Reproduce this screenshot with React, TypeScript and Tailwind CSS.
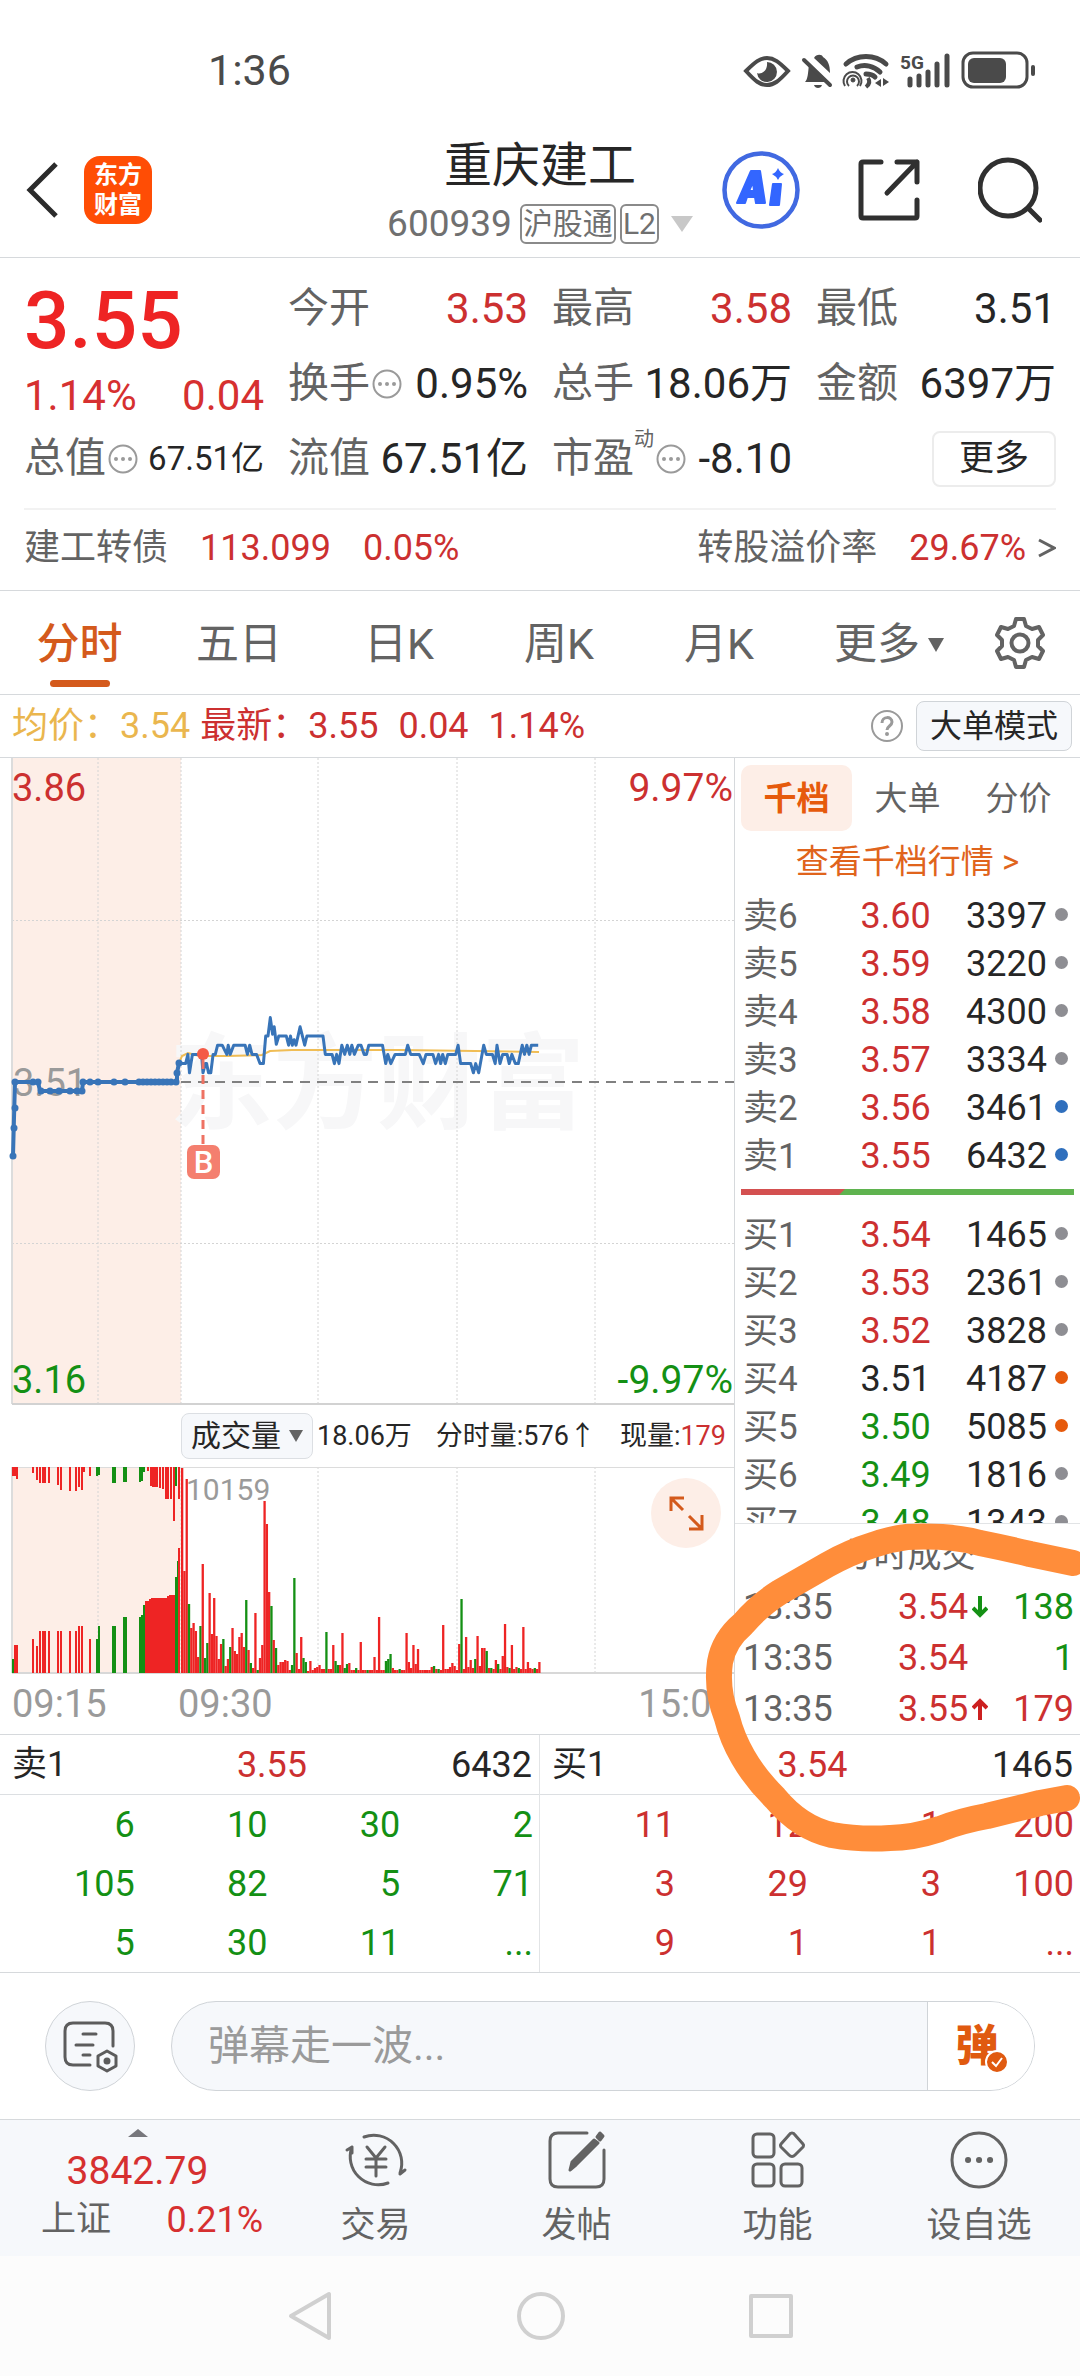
import { useState } from 'react';

type Tone = 'red' | 'green' | 'black';

type BookRow = {
  label: string;
  price: string;
  tone: Tone;
  qty: number;
  dot: string;
};

const TONE: Record<Tone, string> = {
  red: 'text-[#cc3030]',
  green: 'text-[#149014]',
  black: 'text-[#262626]',
};

const SELLS: BookRow[] = [
  { label: '卖6', price: '3.60', tone: 'red', qty: 3397, dot: 'bg-[#8e8e93]' },
  { label: '卖5', price: '3.59', tone: 'red', qty: 3220, dot: 'bg-[#8e8e93]' },
  { label: '卖4', price: '3.58', tone: 'red', qty: 4300, dot: 'bg-[#8e8e93]' },
  { label: '卖3', price: '3.57', tone: 'red', qty: 3334, dot: 'bg-[#8e8e93]' },
  { label: '卖2', price: '3.56', tone: 'red', qty: 3461, dot: 'bg-[#2f6fbd]' },
  { label: '卖1', price: '3.55', tone: 'red', qty: 6432, dot: 'bg-[#2f6fbd]' },
];

const BUYS: BookRow[] = [
  { label: '买1', price: '3.54', tone: 'red', qty: 1465, dot: 'bg-[#8e8e93]' },
  { label: '买2', price: '3.53', tone: 'red', qty: 2361, dot: 'bg-[#8e8e93]' },
  { label: '买3', price: '3.52', tone: 'red', qty: 3828, dot: 'bg-[#8e8e93]' },
  { label: '买4', price: '3.51', tone: 'black', qty: 4187, dot: 'bg-[#e65a0c]' },
  { label: '买5', price: '3.50', tone: 'green', qty: 5085, dot: 'bg-[#e65a0c]' },
  { label: '买6', price: '3.49', tone: 'green', qty: 1816, dot: 'bg-[#8e8e93]' },
  { label: '买7', price: '3.48', tone: 'green', qty: 1343, dot: 'bg-[#8e8e93]' },
];

const TRADES: { time: string; price: string; dir: 'up' | 'down' | ''; qty: number; tone: Tone }[] = [
  { time: '13:35', price: '3.54', dir: 'down', qty: 138, tone: 'green' },
  { time: '13:35', price: '3.54', dir: '', qty: 1, tone: 'green' },
  { time: '13:35', price: '3.55', dir: 'up', qty: 179, tone: 'red' },
];

const SELL_QUEUE = [
  ['6', '10', '30', '2'],
  ['105', '82', '5', '71'],
  ['5', '30', '11', '...'],
];

const BUY_QUEUE = [
  ['11', '12', '1', '200'],
  ['3', '29', '3', '100'],
  ['9', '1', '1', '...'],
];

// [minute since 09:30, ticks above previous close]
const PRICES: [number, number][] = [
  [0, 2], [2, 2], [3, 3], [3.7, 1], [5, 3], [9, 3], [9.6, 1], [10.6, 2], [11.2, 2], [12, 1], [13, 1], [14, 3],
  [15, 3], [16, 4], [18, 4], [20, 3], [20.6, 4], [21.5, 3], [23, 4], [28, 4], [29, 3], [30, 4], [31, 3],
  [33, 3], [34.5, 2], [36, 2], [37, 5], [38, 5], [39, 7], [40, 5.2], [40.7, 6], [41.6, 4.1], [42.7, 5],
  [46, 5], [47, 4], [47.8, 5], [48.6, 4], [49.4, 4.6], [50.2, 4], [52, 6], [54, 4], [55, 5], [62, 5],
  [63, 3], [66, 3], [67, 2], [68, 3], [69, 2], [70.2, 4], [71.5, 3], [72.6, 4], [73.7, 3], [74.6, 4],
  [75.7, 3], [77.4, 4], [78.6, 4], [80, 3], [81, 3], [82, 4], [88, 4], [89.4, 2], [90.3, 3], [91.6, 2],
  [93.5, 3], [98, 3], [99, 4], [100.3, 3], [104, 3], [105.8, 2], [107, 3], [110, 3], [111.2, 2],
  [112.5, 3], [113.4, 2], [114.3, 3], [115.4, 2], [116.5, 3], [120, 3], [121, 4], [122.1, 2], [126.5, 2],
  [127.7, 1], [128.7, 2], [130, 1], [132.2, 4], [133.3, 3], [136, 3], [137.2, 2], [138, 4], [139.3, 2],
  [140.5, 3], [142.4, 3], [143.3, 2], [144.5, 3], [146, 2], [147.3, 2], [149, 4], [150, 3], [151, 4],
  [152, 3], [153, 4], [156, 4],
];

const AUCTION_DOTS: [number, number][] = [
  [13, 1156], [14, 1128], [15, 1108], [15, 1082], [33, 1082], [38, 1082], [41, 1091], [50, 1091], [59, 1091],
  [70, 1091], [77, 1091], [82, 1091], [83, 1082], [90, 1082], [98, 1082], [114, 1082], [125, 1082],
  [139, 1082], [143, 1082], [147, 1082], [151, 1082], [155, 1082], [159, 1082], [163, 1082], [167, 1082],
  [171, 1082], [176, 1082], [177, 1073], [179, 1063],
];

// one value per minute, negative means a falling (green) bar
const VOLUMES = [
  205, 102, 194, -69, 45, 50, 42, 16, -47, 109, -15, -30, 80, 39, 75, 37, 14, 29, -34, 7, 14, -26, 45, 22, 19, 36,
  40, 26, -73, 23, -10, 5, 60, -3, 15, 28, 172, 149, 81, -67, 33, -25, 8, 11, 11, 13, 12, 3, -8, -95, 20, 4, 36,
  -15, -11, 2, 12, 3, 5, 6, 8, 4, 4, -41, 4, 4, 28, -12, -8, 8, 40, -5, -9, 10, 3, 3, -5, 3, 31, 3, 3, -3, 3, 3,
  16, 3, 56, 3, 3, -12, -14, -19, 5, 3, 3, -4, 3, 3, 40, 11, 5, 28, 9, 24, 3, 3, 3, 3, 3, 6, -7, 4, -4, 3, 48, 4,
  4, 6, 10, 7, 3, 29, -74, 4, 36, 6, 13, 5, -14, 37, 7, 25, 25, -22, 5, -5, 4, 13, -9, 4, 17, 49, 6, -5, 28, 4,
  6, -5, 4, 46, 4, 11, 5, 4, -5, 4, 11,
];

// [x, height], negative height is green
const AUCTION_BOTTOM: [number, number][] = [
  [13, -14], [15, 28], [17, 28], [33, 34], [37, 27], [40, 42], [43, 42], [45, 42], [49, 42], [58, 42], [61, 42],
  [70, 42], [76, 42], [79, 47], [82, 47], [90, 34], [97, -34], [99, -47], [113, -47], [115, -47], [124, -56],
  [126, -56], [140, -56], [142, -58], [144, -68], [146, 72], [148, 72], [150, 74], [152, 75], [154, 75],
  [156, 75], [158, 75], [160, 75], [162, 75], [164, 75], [166, 75], [168, 77], [170, 78], [172, 78], [174, 78],
  [176, -96], [178, -112], [179, 125],
];

const AUCTION_TOP: [number, number][] = [
  [13, 9], [15, 9], [17, 12], [33, 6], [37, 13], [40, 16], [43, 16], [45, 16], [49, 16], [58, 18], [61, 23],
  [70, 24], [76, 24], [79, 20], [82, 23], [84, 5], [90, 9], [97, -9], [99, -8], [113, -16], [115, -16],
  [124, -15], [126, -15], [140, -15], [142, -14], [144, -5], [148, 4], [151, 19], [153, 20], [155, 20],
  [157, 20], [160, 21], [163, 22], [166, 32], [168, 32], [171, 32], [174, 54], [176, -19], [179, 32],
];

const GRID_X = [98, 181, 318, 457, 595];
const MINUTE = 2.29;

function volumeColor(v: number) {
  return v < 0 ? '#149014' : '#ee2424';
}

export default function App() {
  return (
    <div className="w-full overflow-hidden bg-white font-[Roboto,'Noto_Sans_CJK_SC',sans-serif] leading-none text-[#262626]">
      <StatusBar />
      <Header />
      <QuoteSummary />
      <PeriodTabs />
      <InfoRow />
      <main className="relative">
        <div className="grid grid-cols-[734fr_346fr]">
          <div>
            <PriceChart />
            <VolumeHeader />
            <VolumeChart />
          </div>
          <SidePanel />
        </div>
        <div className="grid grid-cols-2 border-y border-[#d6d9dc]">
          <Queue label="卖1" price="3.55" qty="6432" rows={SELL_QUEUE} tone="green" />
          <Queue label="买1" price="3.54" qty="1465" rows={BUY_QUEUE} tone="red" />
        </div>
        <MarkerStroke />
      </main>
      <CommentBar />
      <BottomBar />
      <SystemNav />
    </div>
  );
}

function StatusBar() {
  return (
    <div className="flex h-[120px] items-center justify-between pl-[208px] pr-[42px] pt-5">
      <span className="text-[43px] text-[#4a4a4a]">1:36</span>
      <svg width="296" height="40" viewBox="740 48 296 40" fill="none" stroke="#4a4a4a">
        <path d="M744 69c9-9 14-13 21-13s12 4 21 13c-9 10-14 14-21 14s-12-4-21-14Z" strokeWidth="4" />
        <path d="M765 60a10 10 0 1 1-10 11c4 2 11-2 10-11Z" fill="#4a4a4a" stroke="none" />
        <path d="M803 80c3-3 3-9 4-18l19 18Z" fill="#4a4a4a" stroke="none" />
        <path d="M812 56c2-4 8-4 9-1 5 3 7 8 7 16Z" fill="#4a4a4a" stroke="none" />
        <path d="M802 58l26 25" strokeWidth="4" strokeLinecap="round" />
        <path d="M812 83h8c-1 4-7 4-8 0Z" fill="#4a4a4a" stroke="none" />
        <path d="M844 62c11-10 29-10 40 0" strokeWidth="5" strokeLinecap="round" />
        <path d="M855 65c8-3 17-1 23 5" strokeWidth="5" strokeLinecap="round" />
        <path d="M864 72c4 0 7 1 9 3" strokeWidth="5" strokeLinecap="round" />
        <circle cx="851" cy="78" r="2" fill="#4a4a4a" />
        <path d="M847 84a6 6 0 1 1 8 0M843 84a9 9 0 1 1 15 0" strokeWidth="2" />
        <path d="M866 76c2 3 2 6-2 9" strokeWidth="4" />
        <path d="M873 81l6-4v8ZM881 76v8l6-4Z" fill="#4a4a4a" stroke="none" />
        <text x="898" y="67" fontSize="19" fontWeight="700" fill="#4a4a4a" stroke="none">5G</text>
        <path d="M908 77v6M917 74v9M926 70v13M935 62v21M945 54v29" strokeWidth="5" strokeLinecap="round" />
        <rect x="961" y="51" width="64" height="34" rx="10" strokeWidth="3" />
        <rect x="966" y="56" width="38" height="25" rx="6" fill="#4a4a4a" stroke="none" />
        <path d="M1031 65v7" strokeWidth="4" strokeLinecap="round" />
      </svg>
    </div>
  );
}

function Header() {
  return (
    <header className="grid h-[138px] grid-cols-[1fr_auto_1fr] items-center border-b border-[#d6d9dc] px-6 pt-[2px]">
      <div className="flex items-center gap-6">
        <button aria-label="返回">
          <svg width="36" height="58" viewBox="0 0 36 58" fill="none" stroke="#2b2b2b" strokeWidth="5">
            <path d="M32 3L6 29l26 26" />
          </svg>
        </button>
        <div className="flex h-[68px] w-[68px] flex-col items-center justify-center gap-1 rounded-2xl bg-[#ff4d05] text-2xl font-bold leading-[26px] text-white">
          <span>东方</span>
          <span>财富</span>
        </div>
      </div>
      <div className="flex flex-col items-center gap-2">
        <h1 className="text-[48px] leading-[60px]">重庆建工</h1>
        <div className="flex items-center gap-1 text-[#707070]">
          <span className="text-[37px]">600939</span>
          <span className="ml-1 rounded-md border-2 border-[#8a8a8a] px-[1px] py-[1px] text-[30px] leading-[34px]">沪股通</span>
          <span className="rounded-md border-2 border-[#8a8a8a] px-[1px] py-[1px] text-[30px] leading-[34px]">L2</span>
          <svg className="ml-2" width="22" height="16" viewBox="0 0 22 16" fill="#c8c8c8">
            <path d="M0 0h22L11 16Z" />
          </svg>
        </div>
      </div>
      <div className="flex items-center justify-end gap-[57px] pr-[14px]">
        <button aria-label="Ai">
          <svg width="78" height="78" viewBox="0 0 78 78">
            <circle cx="39" cy="39" r="36.500" fill="none" stroke="#4169e1" strokeWidth="4.500" />
            <path fillRule="evenodd" d="M29 20h9l5 32h-9l-1-6h-8l-2 6h-8Zm2 11l-4 9h5Z" fill="#3366ff" stroke="#3366ff" strokeWidth="2" strokeLinejoin="round" />
            <path d="M51 33h8l-2 21h-9Z" fill="#3366ff" stroke="#3366ff" strokeWidth="2" strokeLinejoin="round" />
            <path d="M56 17q2 5 6 6q-4 2-6 6q-2-4-6-6q4-1 6-6Z" fill="#3366ff" />
          </svg>
        </button>
        <button aria-label="分享">
          <svg width="64" height="64" viewBox="0 0 64 64" fill="none" stroke="#303030" strokeWidth="5" strokeLinecap="round" strokeLinejoin="round">
            <path d="M24 4H6q-2 0-2 2v52q0 2 2 2h52q2 0 2-2V42" />
            <path d="M40 4h20v20M60 4L30 35" />
          </svg>
        </button>
        <button aria-label="搜索">
          <svg width="64" height="66" viewBox="0 0 64 66" fill="none" stroke="#303030" strokeWidth="5" strokeLinecap="round">
            <circle cx="30" cy="31" r="28" />
            <path d="M50 51l12 12" />
          </svg>
        </button>
      </div>
    </header>
  );
}

function MoreDot() {
  return (
    <svg className="ml-[2px] shrink-0" width="30" height="30" viewBox="0 0 30 30" fill="#9a9a9a">
      <circle cx="15" cy="15" r="13.500" fill="none" stroke="#9a9a9a" strokeWidth="2" />
      <circle cx="8" cy="15" r="2" />
      <circle cx="15" cy="15" r="2" />
      <circle cx="22" cy="15" r="2" />
    </svg>
  );
}

function Field({ label, value, tone = 'black', more, sup, small }: { label: string; value: string; tone?: Tone; more?: boolean; sup?: string; small?: boolean }) {
  return (
    <div className="flex h-[75px] items-center whitespace-nowrap">
      <dt className="flex items-center text-[41px] text-[#636363]">
        {label}
        {sup && <span className="mb-10 text-xl">{sup}</span>}
        {more && <MoreDot />}
      </dt>
      <dd className={`ml-auto ${small ? 'text-[33px]' : 'text-[42px]'} ${TONE[tone]}`}>{value}</dd>
    </div>
  );
}

function QuoteSummary() {
  return (
    <section className="border-b border-[#d6d9dc] px-6 pb-1 pt-[13px]">
      <dl className="grid grid-cols-4 gap-x-6">
        <div className="row-span-2">
          <div className="flex h-[100px] items-center text-[80px] font-medium text-[#ee2424]">3.55</div>
          <div className="flex h-[50px] items-center justify-between text-[42px] text-[#d63030]">
            <span>1.14%</span>
            <span>0.04</span>
          </div>
        </div>
        <Field label="今开" value="3.53" tone="red" />
        <Field label="最高" value="3.58" tone="red" />
        <Field label="最低" value="3.51" />
        <Field label="换手" value="0.95%" more />
        <Field label="总手" value="18.06万" />
        <Field label="金额" value="6397万" />
        <Field label="总值" value="67.51亿" more small />
        <Field label="流值" value="67.51亿" />
        <Field label="市盈" value="-8.10" sup="动" more />
        <div className="flex h-[75px] items-center justify-end">
          <button className="h-14 w-[124px] rounded-lg border-2 border-[#ececec] text-[35px]">更多</button>
        </div>
      </dl>
      <div className="mt-3 flex h-[78px] items-center border-t-2 border-[#f2f2f2] text-[36px] text-[#cc3030]">
        <span className="text-[#636363]">建工转债</span>
        <span className="ml-8">113.099</span>
        <span className="ml-8">0.05%</span>
        <a href="#premium" className="ml-auto flex items-center">
          <span className="text-[#636363]">转股溢价率</span>
          <span className="ml-8">29.67%</span>
          <svg className="ml-3" width="18" height="20" viewBox="0 0 18 20" fill="none" stroke="#636363" strokeWidth="3">
            <path d="M1 2l15 8L1 18" />
          </svg>
        </a>
      </div>
    </section>
  );
}

function PeriodTabs() {
  const [active, setActive] = useState('分时');
  return (
    <nav className="grid h-[104px] grid-cols-[159fr_160fr_160fr_160fr_160fr_180fr_82fr] border-b border-[#d6d9dc] pr-[19px] text-[43px] text-[#636363]">
      {['分时', '五日', '日K', '周K', '月K'].map((name) => (
        <button key={name} onClick={() => setActive(name)} className={`relative pt-1 ${active === name ? 'font-medium text-[#d45a1c]' : ''}`}>
          {name}
          {active === name && <span className="absolute bottom-[7px] left-1/2 h-[7px] w-[60px] -translate-x-1/2 rounded-full bg-[#d45a1c]" />}
        </button>
      ))}
      <button className="flex items-center justify-center gap-2 pt-1">
        更多
        <svg width="16" height="14" viewBox="0 0 16 14" fill="#636363">
          <path d="M0 0h16L8 14Z" />
        </svg>
      </button>
      <button aria-label="设置" className="flex items-center justify-center">
        <svg width="54" height="54" viewBox="0 0 54 54" fill="none" stroke="#636363" strokeWidth="4" strokeLinejoin="round">
          <path d="M23 3h8l2 7 6 3 7-2 4 8-5 5v6l5 5-4 8-7-2-6 3-2 7h-8l-2-7-6-3-7 2-4-8 5-5v-6l-5-5 4-8 7 2 6-3Z" />
          <circle cx="27" cy="27" r="8.500" />
        </svg>
      </button>
    </nav>
  );
}

function InfoRow() {
  return (
    <div className="flex h-[63px] items-center whitespace-nowrap border-b border-[#d6d9dc] pl-3 pr-2 text-[36px] text-[#cc3030]">
      <span className="text-[#eab64e]">均价：3.54</span>
      <span className="ml-[10px]">最新：3.55</span>
      <span className="ml-5">0.04</span>
      <span className="ml-5">1.14%</span>
      <svg className="ml-auto" width="34" height="34" viewBox="0 0 34 34" fill="none" stroke="#9a9a9a" strokeWidth="2">
        <circle cx="17" cy="17" r="15" />
        <path d="M12 14c0-7 10-7 10-1 0 4-5 4-5 8" strokeWidth="3" />
        <circle cx="17" cy="25" r="1" />
      </svg>
      <button className="ml-3 h-[50px] w-[156px] rounded-lg border border-[#d0d4d8] bg-[#f6f8fb] text-[32px] text-[#262626]">大单模式</button>
    </div>
  );
}

function PriceChart() {
  const line = PRICES.map(([m, t]) => `${(181 + m * MINUTE).toFixed(1)},${(1082 - t * 9.2).toFixed(1)}`).join(' ');
  return (
    <svg className="block w-full" viewBox="0 758 734 647" role="img" aria-label="分时走势">
      <rect x="12" y="758" width="169" height="646" fill="#fdeee7" />
      <text x="169" y="1121" fontSize="104" fontWeight="700" fill="#f7f7f8">东方财富</text>
      <g stroke="#d4d4d4" strokeWidth="1" strokeDasharray="2 2">
        {GRID_X.map((x) => (
          <line key={x} x1={x} x2={x} y1="758" y2="1404" />
        ))}
        <line x1="12" x2="734" y1="920.500" y2="920.500" />
        <line x1="12" x2="734" y1="1243.500" y2="1243.500" />
      </g>
      <line x1="12" x2="12" y1="758" y2="1404" stroke="#dcdcdc" strokeWidth="2" />
      <line x1="12" x2="734" y1="1404" y2="1404" stroke="#d2d2d2" strokeWidth="2" />
      <line x1="181" x2="734" y1="1082" y2="1082" stroke="#808080" strokeWidth="2" strokeDasharray="10 7" />
      <text x="13" y="1096" fontSize="38" fill="#9a9a9a">3.51</text>
      <polyline points="179,1063 182,1056 188,1053 200,1056 226,1056 262,1055 270,1051 292,1050 400,1050 475,1051 539,1052" fill="none" stroke="#f0bd55" strokeWidth="2" />
      <polyline points="13,1156 14,1118 15,1082 38,1082 40,1091 82,1091 83,1082 177,1082 177,1073 179,1063" fill="none" stroke="#3874b8" strokeWidth="4" />
      {AUCTION_DOTS.map(([x, y], i) => (
        <circle key={i} cx={x} cy={y} r="3.500" fill="#3874b8" />
      ))}
      <polyline points={line} fill="none" stroke="#3874b8" strokeWidth="3" strokeLinejoin="round" />
      <line x1="203" x2="203" y1="1060" y2="1145" stroke="#ee7263" strokeWidth="3" strokeDasharray="9 6" />
      <circle cx="203" cy="1054" r="6" fill="#f45a46" />
      <rect x="187" y="1145" width="33" height="34" rx="7" fill="#f47f6f" />
      <text x="203.500" y="1173" fontSize="31" fontWeight="500" fill="#fff" textAnchor="middle">B</text>
      <text x="12" y="801" fontSize="38" fill="#cc3030">3.86</text>
      <text x="733" y="801" fontSize="39" fill="#cc3030" textAnchor="end">9.97%</text>
      <text x="12" y="1393" fontSize="38" fill="#149014">3.16</text>
      <text x="733" y="1393" fontSize="39" fill="#149014" textAnchor="end">-9.97%</text>
    </svg>
  );
}

function VolumeHeader() {
  return (
    <div className="flex h-[62px] items-center whitespace-nowrap pl-[181px] text-[27px]">
      <button className="flex h-[46px] w-[132px] items-center justify-center gap-2 rounded-lg border border-[#dcdfe3] bg-[#f6f8fb] text-[30px]">
        成交量
        <svg width="14" height="12" viewBox="0 0 14 12" fill="#636363">
          <path d="M0 0h14L7 12Z" />
        </svg>
      </button>
      <span className="ml-1">18.06万</span>
      <span className="ml-6">分时量:576↑</span>
      <span className="ml-6">
        现量:<span className="text-[#cc3030]">179</span>
      </span>
    </div>
  );
}

function VolumeChart() {
  return (
    <svg className="block w-full" viewBox="0 1467 734 267" role="img" aria-label="成交量">
      <rect x="12" y="1467" width="169" height="206" fill="#fdeee7" />
      <g stroke="#d4d4d4" strokeDasharray="2 2">
        {GRID_X.map((x) => (
          <line key={x} x1={x} x2={x} y1="1467" y2="1673" />
        ))}
      </g>
      <line x1="12" x2="12" y1="1467" y2="1673" stroke="#dcdcdc" strokeWidth="2" />
      <line x1="12" x2="734" y1="1467.500" y2="1467.500" stroke="#dcdcdc" />
      <line x1="12" x2="734" y1="1673" y2="1673" stroke="#d8d8d8" strokeWidth="2" />
      <text x="186" y="1500" fontSize="30" fill="#9a9a9a">10159</text>
      {AUCTION_TOP.map(([x, h], i) => (
        <rect key={i} x={x - 1} y="1467" width="2" height={Math.abs(h)} fill={volumeColor(h)} />
      ))}
      {AUCTION_BOTTOM.map(([x, h], i) => (
        <rect key={i} x={x - 1} y={1673 - Math.abs(h)} width="2" height={Math.abs(h)} fill={volumeColor(h)} />
      ))}
      {VOLUMES.map((v, i) => (
        <rect key={i} x={181 + i * MINUTE} y={1673 - Math.abs(v)} width="2.300" height={Math.abs(v)} fill={volumeColor(v)} />
      ))}
      <circle cx="686" cy="1513" r="35" fill="#fdeee7" />
      <path d="M671 1511v-13h13M672 1499l11 11M702 1515v14h-13M701 1528l-12-12" fill="none" stroke="#d45a1c" strokeWidth="3" />
      <g fontSize="38" fill="#9a9a9a">
        <text x="12" y="1717">09:15</text>
        <text x="178" y="1717">09:30</text>
        <text x="733" y="1717" textAnchor="end">15:00</text>
      </g>
    </svg>
  );
}

function BookTable({ rows }: { rows: BookRow[] }) {
  return (
    <table className="w-full table-fixed text-[36px]">
      <tbody>
        {rows.map((r) => (
          <tr key={r.label} className="h-12">
            <th scope="row" className="w-[26%] pl-[2px] text-left text-[35px] font-normal text-[#636363]">{r.label}</th>
            <td className={`w-[31%] text-right ${TONE[r.tone]}`}>{r.price}</td>
            <td className="text-right">
              <div className="flex items-center justify-end gap-2">
                {r.qty}
                <span className={`mb-1 mr-[6px] h-[13px] w-[13px] rounded-full ${r.dot}`} />
              </div>
            </td>
          </tr>
        ))}
      </tbody>
    </table>
  );
}

function SidePanel() {
  const [tab, setTab] = useState('千档');
  return (
    <aside className="border-l border-[#d6d9dc]">
      <div className="h-[766px] overflow-hidden border-b border-[#e2e4e6] pl-[6px] pr-[6px] pt-[7px]">
        <div className="grid h-[66px] grid-cols-3">
          {['千档', '大单', '分价'].map((name) => (
            <button
              key={name}
              onClick={() => setTab(name)}
              className={`rounded-[10px] text-[33px] ${tab === name ? 'bg-[#fdeee7] font-bold text-[#e65a0c]' : 'text-[#636363]'}`}
            >
              {name}
            </button>
          ))}
        </div>
        <div className="mt-[7px] h-[54px] text-center">
          <a href="#depth" className="text-[33px] leading-[48px] text-[#e0641c]">查看千档行情 &gt;</a>
        </div>
        <BookTable rows={SELLS} />
        <div className="h-[31px] pt-[9px]">
          <svg className="block h-[6px] w-full" viewBox="0 0 333 6" preserveAspectRatio="none">
            <rect width="333" height="6" fill="#5fb34f" />
            <path d="M0 0h104l-6 6H0Z" fill="#d45050" />
          </svg>
        </div>
        <BookTable rows={BUYS} />
      </div>
      <h2 className="h-[57px] text-center text-[34px] leading-[62px] text-[#636363]">分时成交</h2>
      <table className="w-full text-[36px]">
        <tbody>
          {TRADES.map((t, i) => (
            <tr key={i} className="h-[51px]">
              <td className="pl-[8px] text-[#636363]">{t.time}</td>
              <td className="w-[106px]">
                <div className="flex items-center text-[#cc3030]">
                  {t.price}
                  {t.dir && (
                    <svg
                      className={t.dir === 'up' ? 'ml-1' : 'ml-1 rotate-180'}
                      width="16"
                      height="22"
                      viewBox="0 0 16 22"
                      fill="none"
                      stroke={t.dir === 'up' ? '#cc2020' : '#149014'}
                      strokeWidth="4"
                    >
                      <path d="M8 22V3M1 10l7-7 7 7" />
                    </svg>
                  )}
                </div>
              </td>
              <td className={`w-[76px] pr-[6px] text-right ${TONE[t.tone]}`}>{t.qty}</td>
            </tr>
          ))}
        </tbody>
      </table>
    </aside>
  );
}

function Queue({ label, price, qty, rows, tone }: { label: string; price: string; qty: string; rows: string[][]; tone: Tone }) {
  return (
    <div className="border-r border-[#e2e4e6] last:border-r-0">
      <div className="grid h-[60px] grid-cols-3 items-center border-b border-[#dcdfe2] pl-3 pr-[7px] text-[36px]">
        <span className="text-[35px]">{label}</span>
        <span className="text-center text-[#cc3030]">{price}</span>
        <span className="text-right">{qty}</span>
      </div>
      <div className="pl-2">
        <table className={`w-full table-fixed text-right text-[36px] ${TONE[tone]}`}>
          <tbody>
            {rows.map((row, i) => (
              <tr key={i} className="h-[59px]">
                {row.map((n, j) => (
                  <td key={j} className="pr-[6px]">{n}</td>
                ))}
              </tr>
            ))}
          </tbody>
        </table>
      </div>
    </div>
  );
}

// Hand-drawn highlight around the latest trades
function MarkerStroke() {
  return (
    <svg className="pointer-events-none absolute right-0 top-[742px]" width="380" height="360" viewBox="700 1500 380 360" fill="none">
      <path
        d="M1073 1563L1030 1554Q1005 1548 980 1543Q950 1535 907 1537Q890 1539 873 1545Q850 1552 827 1565L780 1592Q758 1606 743 1624Q724 1640 720 1662Q716 1690 727 1718Q732 1738 743 1757Q755 1778 775 1798Q800 1828 832 1835Q860 1840 890 1838Q912 1838 940 1829Q960 1821 987 1816L1040 1803L1067 1798"
        stroke="#ff8d3a"
        strokeWidth="26"
        strokeLinecap="round"
        strokeLinejoin="round"
      />
    </svg>
  );
}

function CommentBar() {
  return (
    <div className="flex h-[147px] items-center gap-9 border-b border-[#d6d9dc] pl-[45px] pr-[45px]">
      <button aria-label="弹幕设置" className="flex h-[90px] w-[90px] shrink-0 items-center justify-center rounded-full border border-[#d0d4d8] bg-[#f6f8fb]">
        <svg width="58" height="58" viewBox="0 0 58 58" fill="none" stroke="#5c5c5c" strokeWidth="3" strokeLinecap="round">
          <path d="M29 48H12q-8 0-8-8V14q0-8 8-8h32q8 0 8 8v15" />
          <path d="M22 17h13M15 28h17M22 38h7" />
          <path d="M46 34l9 5v10l-9 5-9-5V39Z" strokeLinejoin="round" fill="#f6f8fb" />
          <circle cx="46" cy="44" r="2" fill="#5c5c5c" />
        </svg>
      </button>
      <div className="flex h-[90px] flex-1 overflow-hidden rounded-full border border-[#d0d4d8] bg-[#f6f8fb]">
        <input type="text" aria-label="弹幕" placeholder="弹幕走一波..." className="min-w-0 flex-1 bg-transparent pl-9 text-[41px] outline-none placeholder:text-[#9a9a9a]" />
        <button className="relative w-[107px] border-l border-[#d0d4d8] bg-white pr-2 text-[43px] font-black text-[#e05a10]">
          弹
          <svg className="absolute bottom-4 left-[57px]" width="24" height="24" viewBox="0 0 24 24">
            <circle cx="12" cy="12" r="11" fill="#e05a10" stroke="#fff" strokeWidth="2" />
            <path d="M7 12l4 4 6-8" fill="none" stroke="#fff" strokeWidth="2" />
          </svg>
        </button>
      </div>
    </div>
  );
}

function BottomBar() {
  return (
    <nav className="grid h-[136px] grid-cols-[275fr_201fr_201fr_201fr_202fr] bg-[#f6f8fb] text-[35px] text-[#636363]">
      <button className="flex flex-col items-center pt-[9px]">
        <svg width="20" height="8" viewBox="0 0 20 8" fill="#77777c">
          <path d="M0 8L10 0l10 8Z" />
        </svg>
        <span className="mt-3 text-[39px] leading-[44px] text-[#d63030]">3842.79</span>
        <span className="mt-[3px] flex w-full justify-between pl-[41px] pr-3 leading-[48px]">
          上证
          <span className="text-[36px] text-[#d63030]">0.21%</span>
        </span>
      </button>
      <BarItem label="交易">
        <path d="M20 9A28 28 0 0 1 56 45M57 41l-1 5 5-4M44 55A28 28 0 0 1 8 19M3 22l5-3 0 6" />
        <path d="M23 19l9 11 9-11M32 30v18M22 31h20M22 39h20" />
      </BarItem>
      <BarItem label="发帖">
        <path d="M42 5H13q-8 0-8 8v38q0 8 8 8h38q8 0 8-8V22" />
        <path d="M25 42l2-8L49 12l4 3-22 22ZM52 9l3-4 3 3-3 4Z" fill="#636363" />
      </BarItem>
      <BarItem label="功能">
        <rect x="7" y="6" width="21" height="23" rx="4" />
        <rect x="7" y="36" width="21" height="22" rx="4" />
        <rect x="35" y="36" width="21" height="22" rx="4" />
        <path d="M46 5q2 0 3 2l8 9q1 1 0 3l-8 8q-3 3-6 0l-8-8q-1-2 0-3l8-9q1-2 3-2Z" />
      </BarItem>
      <BarItem label="设自选">
        <circle cx="32" cy="32" r="27" />
        <path d="M21 32h.1M32 32h.1M43 32h.1" strokeWidth="6" />
      </BarItem>
    </nav>
  );
}

function BarItem({ label, children }: { label: string; children: React.ReactNode }) {
  return (
    <button className="flex flex-col items-center pt-2">
      <svg width="64" height="64" viewBox="0 0 64 64" fill="none" stroke="#636363" strokeWidth="3" strokeLinecap="round" strokeLinejoin="round">
        {children}
      </svg>
      <span className="mt-3 leading-[44px]">{label}</span>
    </button>
  );
}

function SystemNav() {
  return (
    <div className="flex h-[120px] items-center justify-center gap-[184px] bg-[#fcfcfc]">
      <button aria-label="后退">
        <svg width="46" height="50" viewBox="0 0 46 50" fill="none" stroke="#d0d0d0" strokeWidth="4" strokeLinejoin="round">
          <path d="M42 3v44L4 25Z" />
        </svg>
      </button>
      <button aria-label="主页">
        <svg width="48" height="48" viewBox="0 0 48 48" fill="none" stroke="#d0d0d0" strokeWidth="4">
          <circle cx="24" cy="24" r="22" />
        </svg>
      </button>
      <button aria-label="最近任务">
        <svg width="44" height="44" viewBox="0 0 44 44" fill="none" stroke="#d0d0d0" strokeWidth="4" strokeLinejoin="round">
          <rect x="2" y="2" width="40" height="40" />
        </svg>
      </button>
    </div>
  );
}
